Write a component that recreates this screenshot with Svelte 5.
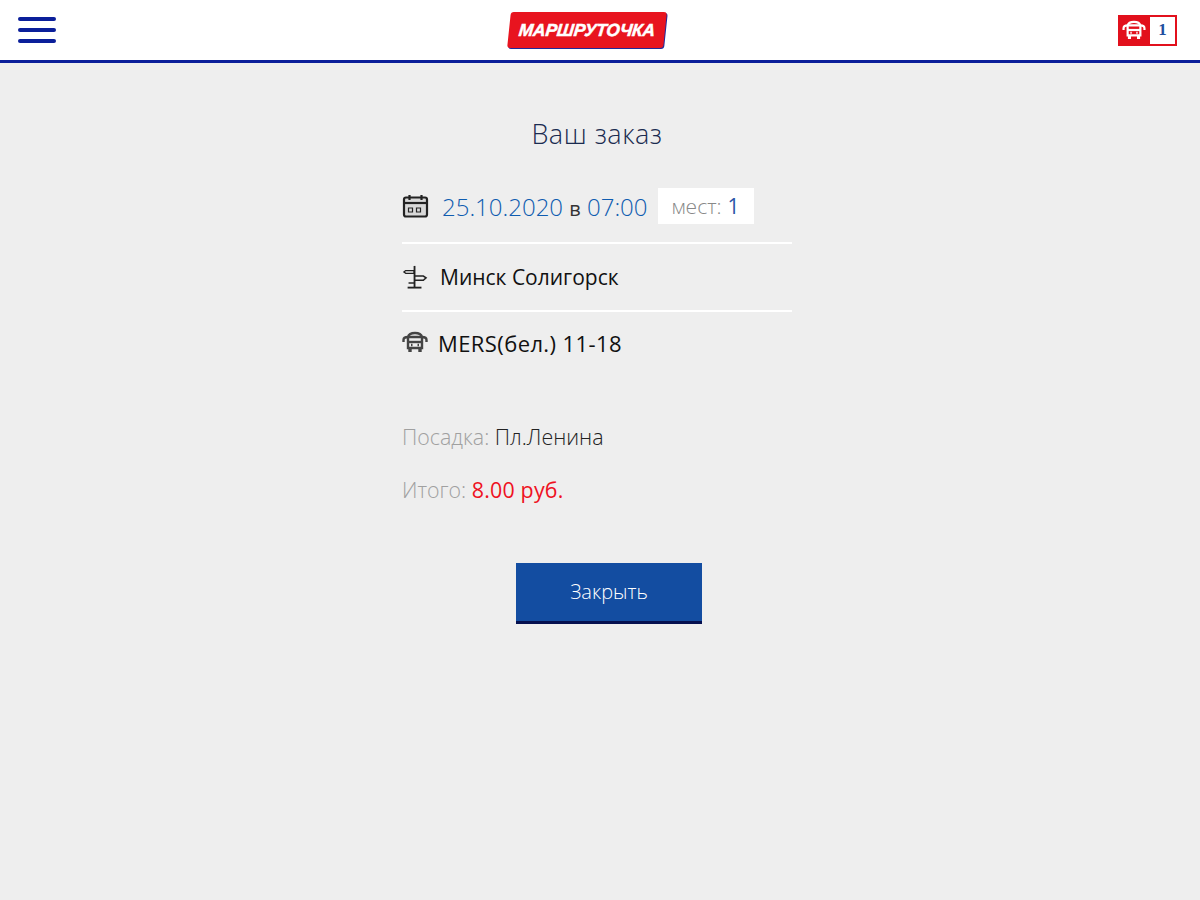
<script>
  const order = {
    date: "25.10.2020",
    time: "07:00",
    seats: 1,
    route: "Минск Солигорск",
    bus: "MERS(бел.) 11-18",
    stop: "Пл.Ленина",
    total: "8.00 руб."
  };
</script>

{#snippet busIcon()}
  <svg viewBox="0 0 26 22" fill="none" stroke="currentColor" stroke-width="2.4">
    <path d="M6 6 Q7 2 13 2 Q19 2 20 6 L20 17 H6 Z" />
    <path d="M1.5 11 V9 Q1.5 6 6 6 H20 Q24.5 6 24.5 9 V11" />
    <path d="M6 11 H20" />
    <path d="M8 17 V21 M18 17 V21" stroke-width="3.4" />
    <path d="M9 14 H10.5 M15.5 14 H17" />
  </svg>
{/snippet}

<header class="topbar">
  <button class="burger" aria-label="Меню">
    <span></span>
    <span></span>
    <span></span>
  </button>
  <div class="logo"><span>МАРШРУТОЧКА</span></div>
  <div class="cart">
    <div class="cart-icon">{@render busIcon()}</div>
    <div class="cart-count">1</div>
  </div>
</header>

<main class="order">
  <h1>Ваш заказ</h1>

  <div class="row date-row">
    <svg class="icon" viewBox="0 0 26 24" fill="none" stroke="#222" stroke-width="2.2">
      <rect x="1.5" y="3.5" width="23" height="19" rx="2" fill="#d8d8d8" />
      <path d="M1.5 9 H24.5" />
      <path d="M7 1 V6 M19 1 V6" />
      <path d="M6 14 H10 V18 H6 Z M14 14 H18 V18 H14 Z" stroke-width="1.2" />
    </svg>
    <span class="date">{order.date} <b>в</b> {order.time}</span>
    <span class="seats">мест: <em>{order.seats}</em></span>
  </div>

  <div class="row route-row">
    <svg class="icon sign" viewBox="0 0 26 26" fill="none" stroke="#222" stroke-width="2">
      <path d="M12.5 1 V24" />
      <path d="M5 24.5 H20" />
      <path d="M3 6 L1 7.5 L3 9 H12 V6 Z" stroke-width="1.4" />
      <path d="M13 12 H22 L25 14 L22 16.5 H13" stroke-width="1.6" />
      <path d="M6 19.5 H12" stroke-width="1.6" />
    </svg>
    <span>{order.route}</span>
  </div>

  <div class="row bus-row">
    <div class="icon bus">{@render busIcon()}</div>
    <span>{order.bus}</span>
  </div>

  <p class="line stop"><span class="label">Посадка:</span> {order.stop}</p>
  <p class="line total"><span class="label">Итого:</span> <span class="price">{order.total}</span></p>

  <div class="actions">
    <button class="close">Закрыть</button>
  </div>
</main>

<style>
  :global(body) {
    background: #eeeeee;
    font-family: "Open Sans", "Noto Sans", sans-serif;
    min-height: 900px;
  }
  .topbar {
    height: 60px;
    background: #fff;
    border-bottom: 3px solid #0b1f9a;
    display: flex;
    align-items: center;
    justify-content: space-between;
    padding: 0 23px 0 18px;
  }
  .burger {
    width: 38px;
    height: 26px;
    padding: 0;
    border: none;
    background: none;
    display: flex;
    flex-direction: column;
    justify-content: space-between;
  }
  .burger span {
    display: block;
    height: 4px;
    border-radius: 2px;
    background: #0b1f9a;
  }
  .logo {
    width: 156px;
    height: 36px;
    background: #e8141f;
    border-radius: 3px;
    box-shadow: 1px 1px 0 #1f2a9c;
    transform: skewX(-6deg);
    display: flex;
    align-items: center;
    justify-content: center;
  }
  .logo span {
    color: #fff;
    font-family: "Liberation Sans", sans-serif;
    font-size: 17.4px;
    font-weight: 700;
    font-style: italic;
    white-space: nowrap;
    letter-spacing: -0.2px;
    -webkit-text-stroke: 0.5px #fff;
  }
  .cart {
    display: flex;
    width: 59px;
    height: 31px;
    background: #e2101c;
    padding: 2px 2px 2px 0;
    box-sizing: border-box;
  }
  .cart-icon {
    width: 32px;
    color: #fff;
    display: flex;
    align-items: center;
    justify-content: center;
  }
  .cart-icon svg {
    width: 24px;
    height: 20px;
  }
  .cart-count {
    flex: 1;
    background: #fff;
    color: #1f4fa0;
    font-family: "Liberation Serif", serif;
    font-weight: 700;
    font-size: 17px;
    display: flex;
    align-items: center;
    justify-content: center;
  }
  .order {
    width: 390px;
    margin: 0 auto;
    padding-right: 6px;
  }
  h1 {
    margin: 0;
    padding-top: 54px;
    height: 71px;
    font-size: 27px;
    line-height: 34px;
    font-weight: 300;
    letter-spacing: 0.5px;
    color: #1a2b50;
    text-align: center;
  }
  .row {
    display: flex;
    align-items: center;
    color: #111;
    font-size: 21px;
    height: 66px;
    border-bottom: 2px solid #fff;
  }
  .date-row {
    height: 36px;
    padding-bottom: 18px;
  }
  .icon {
    flex: none;
    width: 26px;
    height: 24px;
  }
  .date-row .icon {
    width: 27px;
    margin-right: 13px;
  }
  .date {
    color: #0f5cb0;
    font-size: 24px;
    font-weight: 300;
    white-space: nowrap;
  }
  .date b {
    font-weight: 400;
    color: #333;
    font-size: 20px;
  }
  .seats {
    margin-left: 10px;
    background: #fff;
    height: 36px;
    width: 96px;
    display: flex;
    align-items: center;
    justify-content: center;
    gap: 6px;
    color: #888;
    font-size: 21px;
    font-weight: 300;
  }
  .seats em {
    font-style: normal;
    font-weight: 400;
    color: #2a55a8;
  }
  .route-row .icon {
    margin-right: 12px;
  }
  .bus-row {
    border-bottom: none;
    height: 62px;
    padding-bottom: 4px;
    font-size: 22px;
    letter-spacing: 0.4px;
  }
  .bus {
    color: #444;
    margin-right: 10px;
  }
  .bus svg {
    width: 26px;
    height: 22px;
    display: block;
  }
  .line {
    margin: 0;
    font-size: 21.4px;
    line-height: 28px;
    font-weight: 300;
    color: #222;
  }
  .stop {
    margin-top: 45px;
  }
  .total {
    margin-top: 25px;
  }
  .label {
    color: #a0a0a0;
  }
  .price {
    color: #ee1122;
    font-weight: 400;
    letter-spacing: 0.2px;
  }
  .actions {
    display: flex;
    justify-content: center;
    margin-top: 59px;
    padding-left: 24px;
  }
  .close {
    width: 186px;
    height: 61px;
    border: none;
    border-bottom: 3px solid #05104f;
    background: #134da1;
    color: #fff;
    font-family: inherit;
    font-size: 20px;
    font-weight: 300;
    padding: 0 0 2px;
  }
</style>
